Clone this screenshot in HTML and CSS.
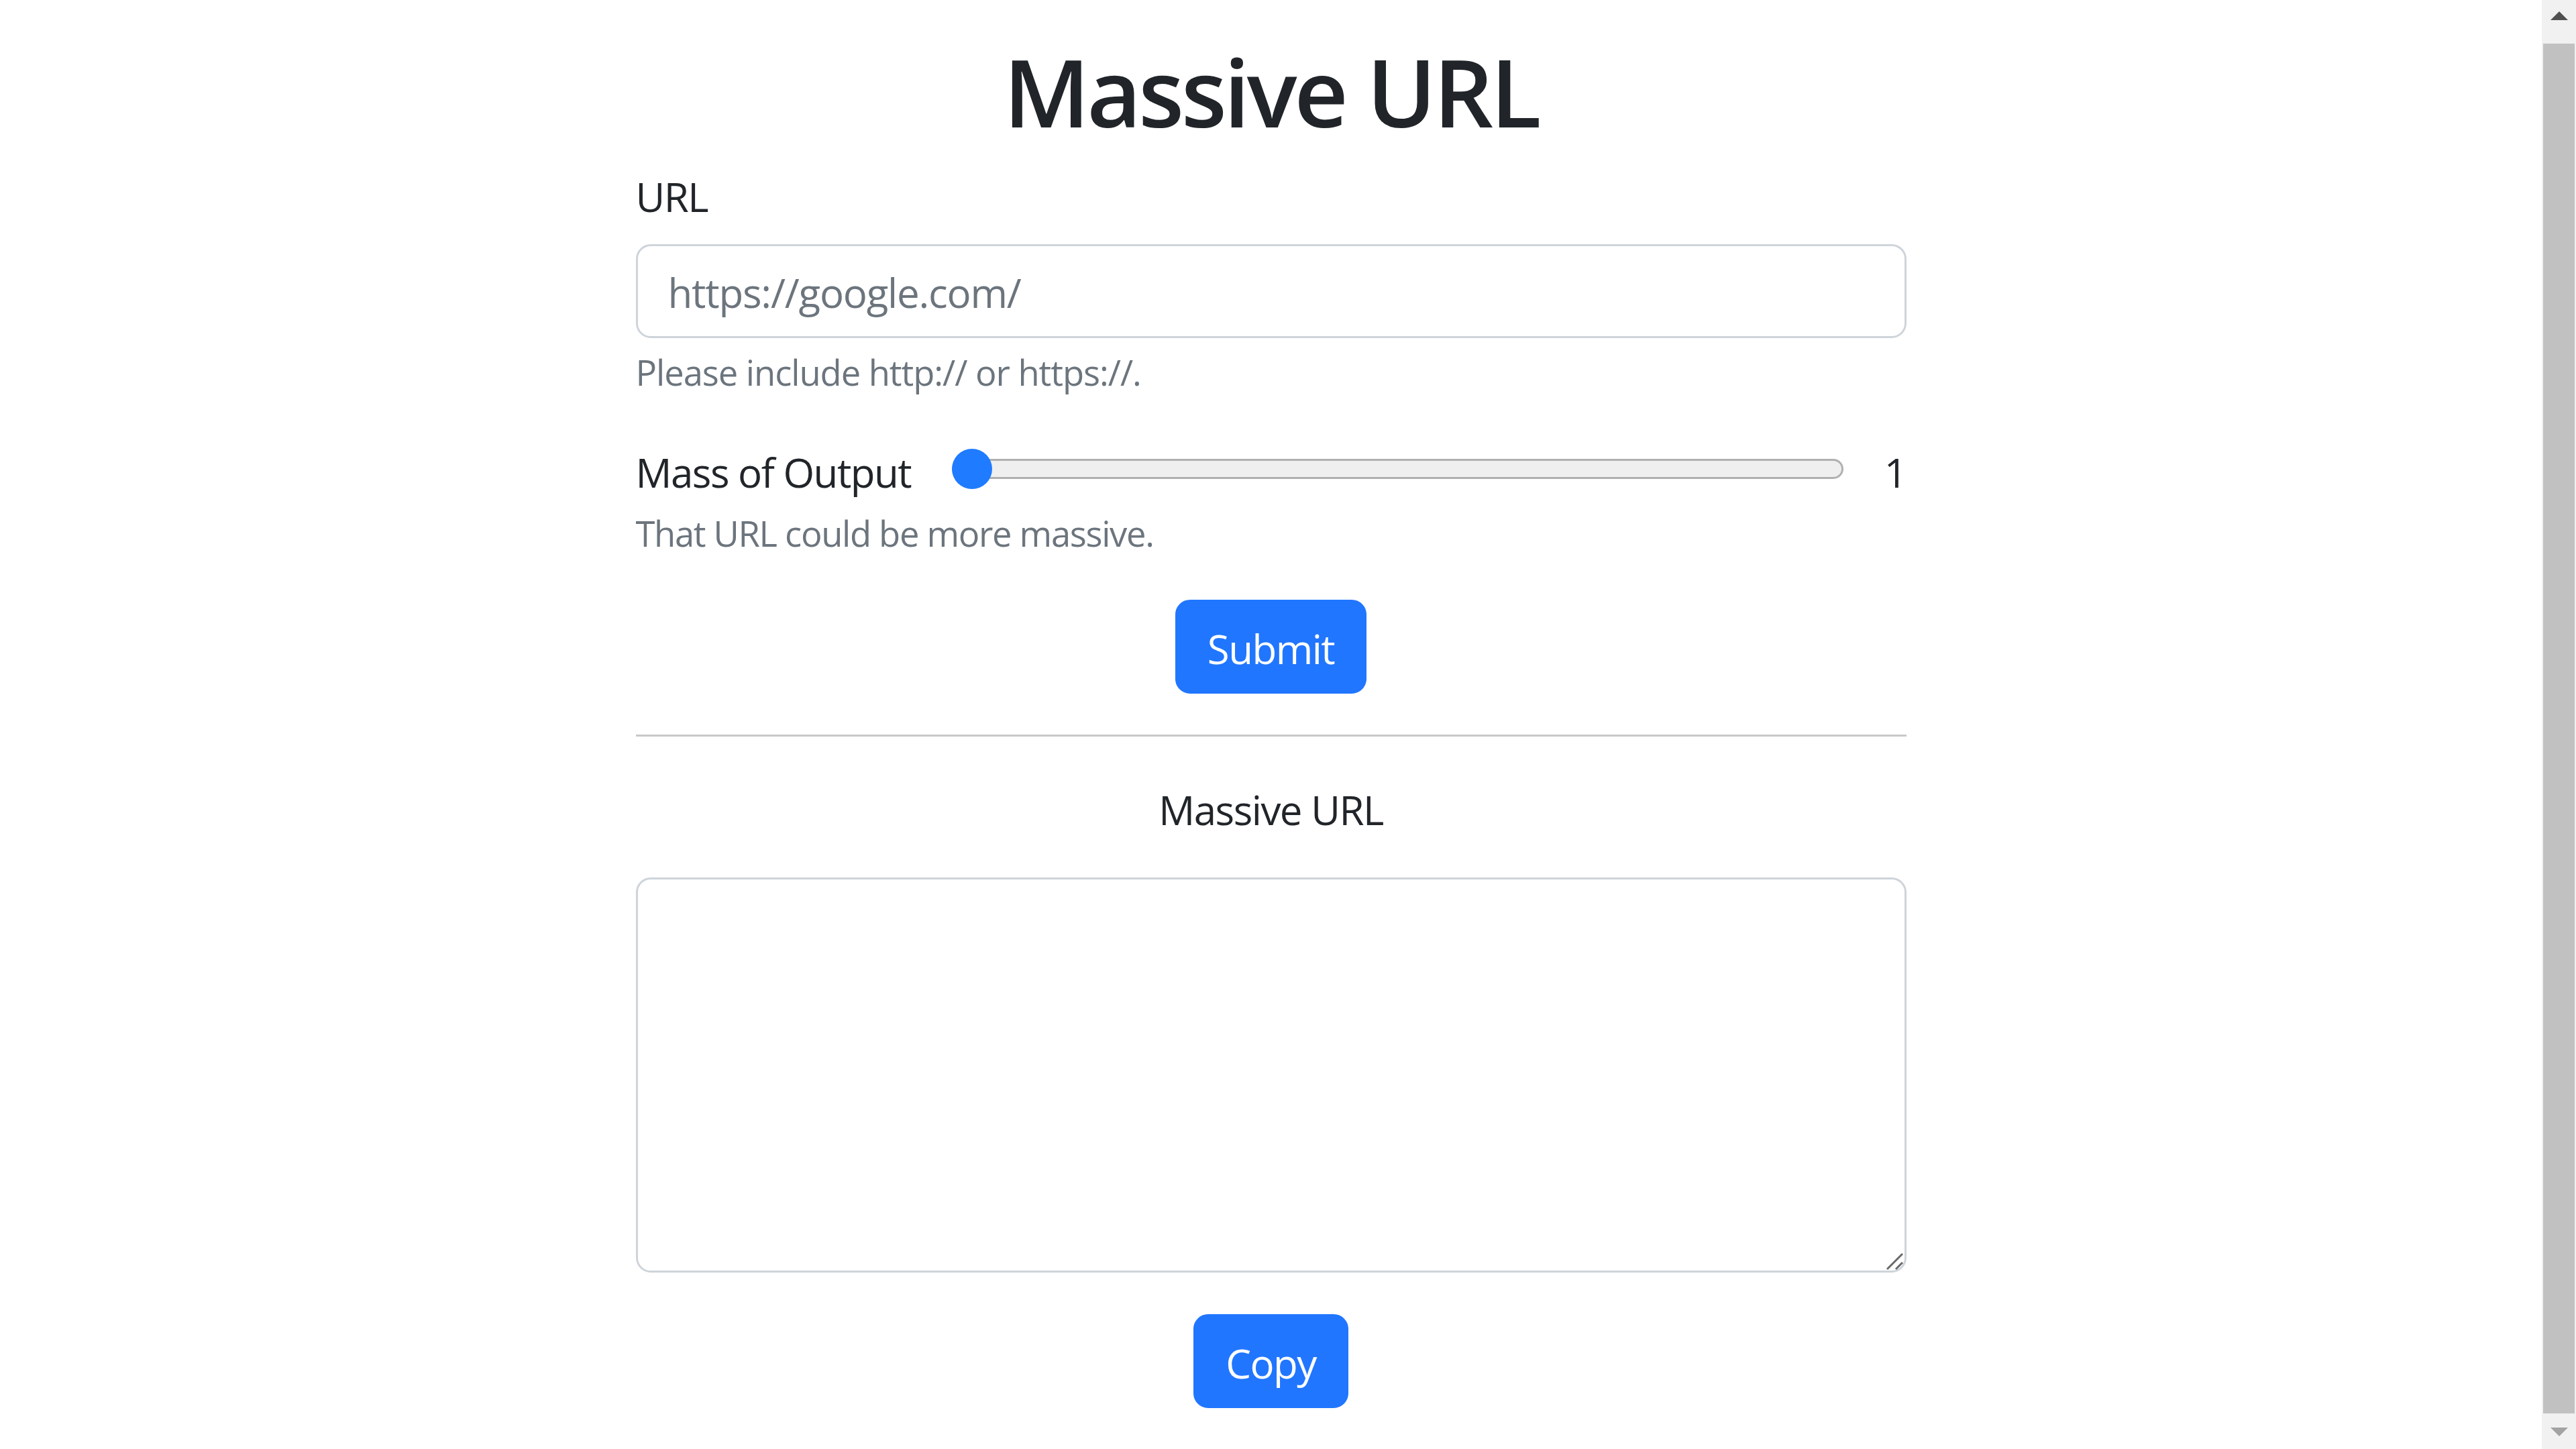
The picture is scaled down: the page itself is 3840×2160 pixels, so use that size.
FILE: index.html
```html
<!DOCTYPE html>
<html>
<head>
<meta charset="utf-8">
<title>Massive URL</title>
<link rel="stylesheet" href="styles.css">
</head>
<body>
<div class="page">
    <div class="main">
        <div class="container">
            <h1 class="title">Massive URL</h1>
            <form class="mass-form">
                <label class="label" for="url">URL</label>
                <input class="field" type="text" id="url" name="url" placeholder="https://google.com/">
                <div class="hint">Please include http:// or https://.</div>
                <div class="mass-row">
                    <label class="mass-label" for="mass">Mass of Output</label>
                    <input class="mass-range" type="range" id="mass" name="mass" min="1" max="10" value="1">
                    <span class="mass-value" id="mass-value">1</span>
                </div>
                <div class="hint hint-mass" id="mass-hint">That URL could be more massive.</div>
                <div class="actions actions-submit">
                    <button type="button" class="btn">Submit</button>
                </div>
            </form>
            <hr class="divider">
            <div class="output-title">Massive URL</div>
            <div class="output-box">
                <textarea class="output" id="output"></textarea>
                <svg class="grip" width="28" height="28" viewBox="0 0 28 28">
                    <line x1="2" y1="26" x2="25" y2="3" stroke="#696969" stroke-width="3"/>
                    <line x1="15" y1="26" x2="25" y2="16" stroke="#696969" stroke-width="3"/>
                </svg>
            </div>
            <div class="actions actions-copy">
                <button type="button" class="btn" id="copy">Copy</button>
            </div>
        </div>
    </div>
    <div class="scrollbar">
        <div class="scroll-btn scroll-up">
            <svg width="26" height="13" viewBox="0 0 26 13"><polygon points="0,13 13,0 26,13" fill="#505050"/></svg>
        </div>
        <div class="scroll-thumb"></div>
        <div class="scroll-btn scroll-down">
            <svg width="26" height="13" viewBox="0 0 26 13"><polygon points="0,0 26,0 13,13" fill="#a3a3a3"/></svg>
        </div>
    </div>
</div>
</body>
</html>
```

FILE: styles.css
```css
html, body {
    margin: 0;
    height: 100%;
}
body {
    background-color: #fff;
    color: #212529;
    font-family: "Open Sans", "Noto Sans", sans-serif;
    font-size: 60px;
    line-height: 1.5;
    letter-spacing: -0.025em;
    overflow: hidden;
}
.page {
    display: flex;
    height: 2160px;
}
.main {
    flex: 1;
}
.container {
    width: 1894px;
    margin: 0 auto;
    padding-top: 52px;
}
.title {
    margin: 0 0 28px;
    font-size: 140px;
    font-weight: 600;
    line-height: 1.2;
    letter-spacing: -0.032em;
    text-align: center;
}
.label {
    display: block;
    margin-bottom: 26px;
}
.field {
    display: block;
    box-sizing: border-box;
    width: 100%;
    height: 140px;
    padding: 3px 45px 0;
    font: inherit;
    letter-spacing: -0.02em;
    color: #212529;
    border: 3px solid #ced4da;
    border-radius: 22px;
    outline: none;
}
.field::placeholder {
    color: #6c757d;
}
.hint {
    margin-top: 12px;
    font-size: 52.5px;
    letter-spacing: -0.02em;
    color: #6c757d;
}
.hint-mass {
    margin-top: 7px;
    letter-spacing: -0.025em;
}
.mass-row {
    display: flex;
    align-items: center;
    margin-top: 64px;
}
.mass-label {
    flex: none;
    width: 471px;
}
.mass-range {
    -webkit-appearance: none;
    appearance: none;
    flex: 1;
    height: 60px;
    margin: -10px 0 0;
    background: transparent;
}
.mass-range::-webkit-slider-runnable-track {
    box-sizing: border-box;
    height: 30px;
    background: #efefef;
    border: 3px solid #b0b0b0;
    border-radius: 15px;
}
.mass-range::-webkit-slider-thumb {
    -webkit-appearance: none;
    width: 60px;
    height: 60px;
    margin-top: -18px;
    margin-left: -3px;
    border: none;
    border-radius: 50%;
    background: #1f7bff;
}
.mass-value {
    margin-left: 61px;
}
.actions {
    text-align: center;
}
.actions-submit {
    margin-top: 59px;
}
.actions-copy {
    margin-top: 62px;
}
.btn {
    padding: 25px 45px 19px;
    font: inherit;
    letter-spacing: inherit;
    color: #fff;
    background-color: #2176ff;
    border: 3px solid #2176ff;
    border-radius: 22px;
    cursor: pointer;
}
.divider {
    height: 0;
    margin: 61px 0 0;
    border: 0;
    border-top: 3px solid #c8c9ca;
}
.output-title {
    margin-top: 64px;
    text-align: center;
}
.output-box {
    position: relative;
    margin-top: 56px;
}
.output {
    display: block;
    box-sizing: border-box;
    width: 100%;
    height: 589px;
    padding: 22px 45px;
    font: inherit;
    letter-spacing: inherit;
    border: 3px solid #ced4da;
    border-radius: 22px;
    resize: none;
    outline: none;
}
.grip {
    position: absolute;
    right: 3px;
    bottom: 3px;
}
.scrollbar {
    display: flex;
    flex: none;
    flex-direction: column;
    width: 51px;
    background-color: #f1f1f1;
}
.scroll-btn {
    display: flex;
    justify-content: center;
    box-sizing: border-box;
}
.scroll-up {
    height: 65px;
    padding-top: 17px;
}
.scroll-down {
    height: 53px;
    padding-top: 21px;
}
.scroll-thumb {
    flex: 1;
    margin: 0 2px;
    background-color: #c1c1c1;
}
```
